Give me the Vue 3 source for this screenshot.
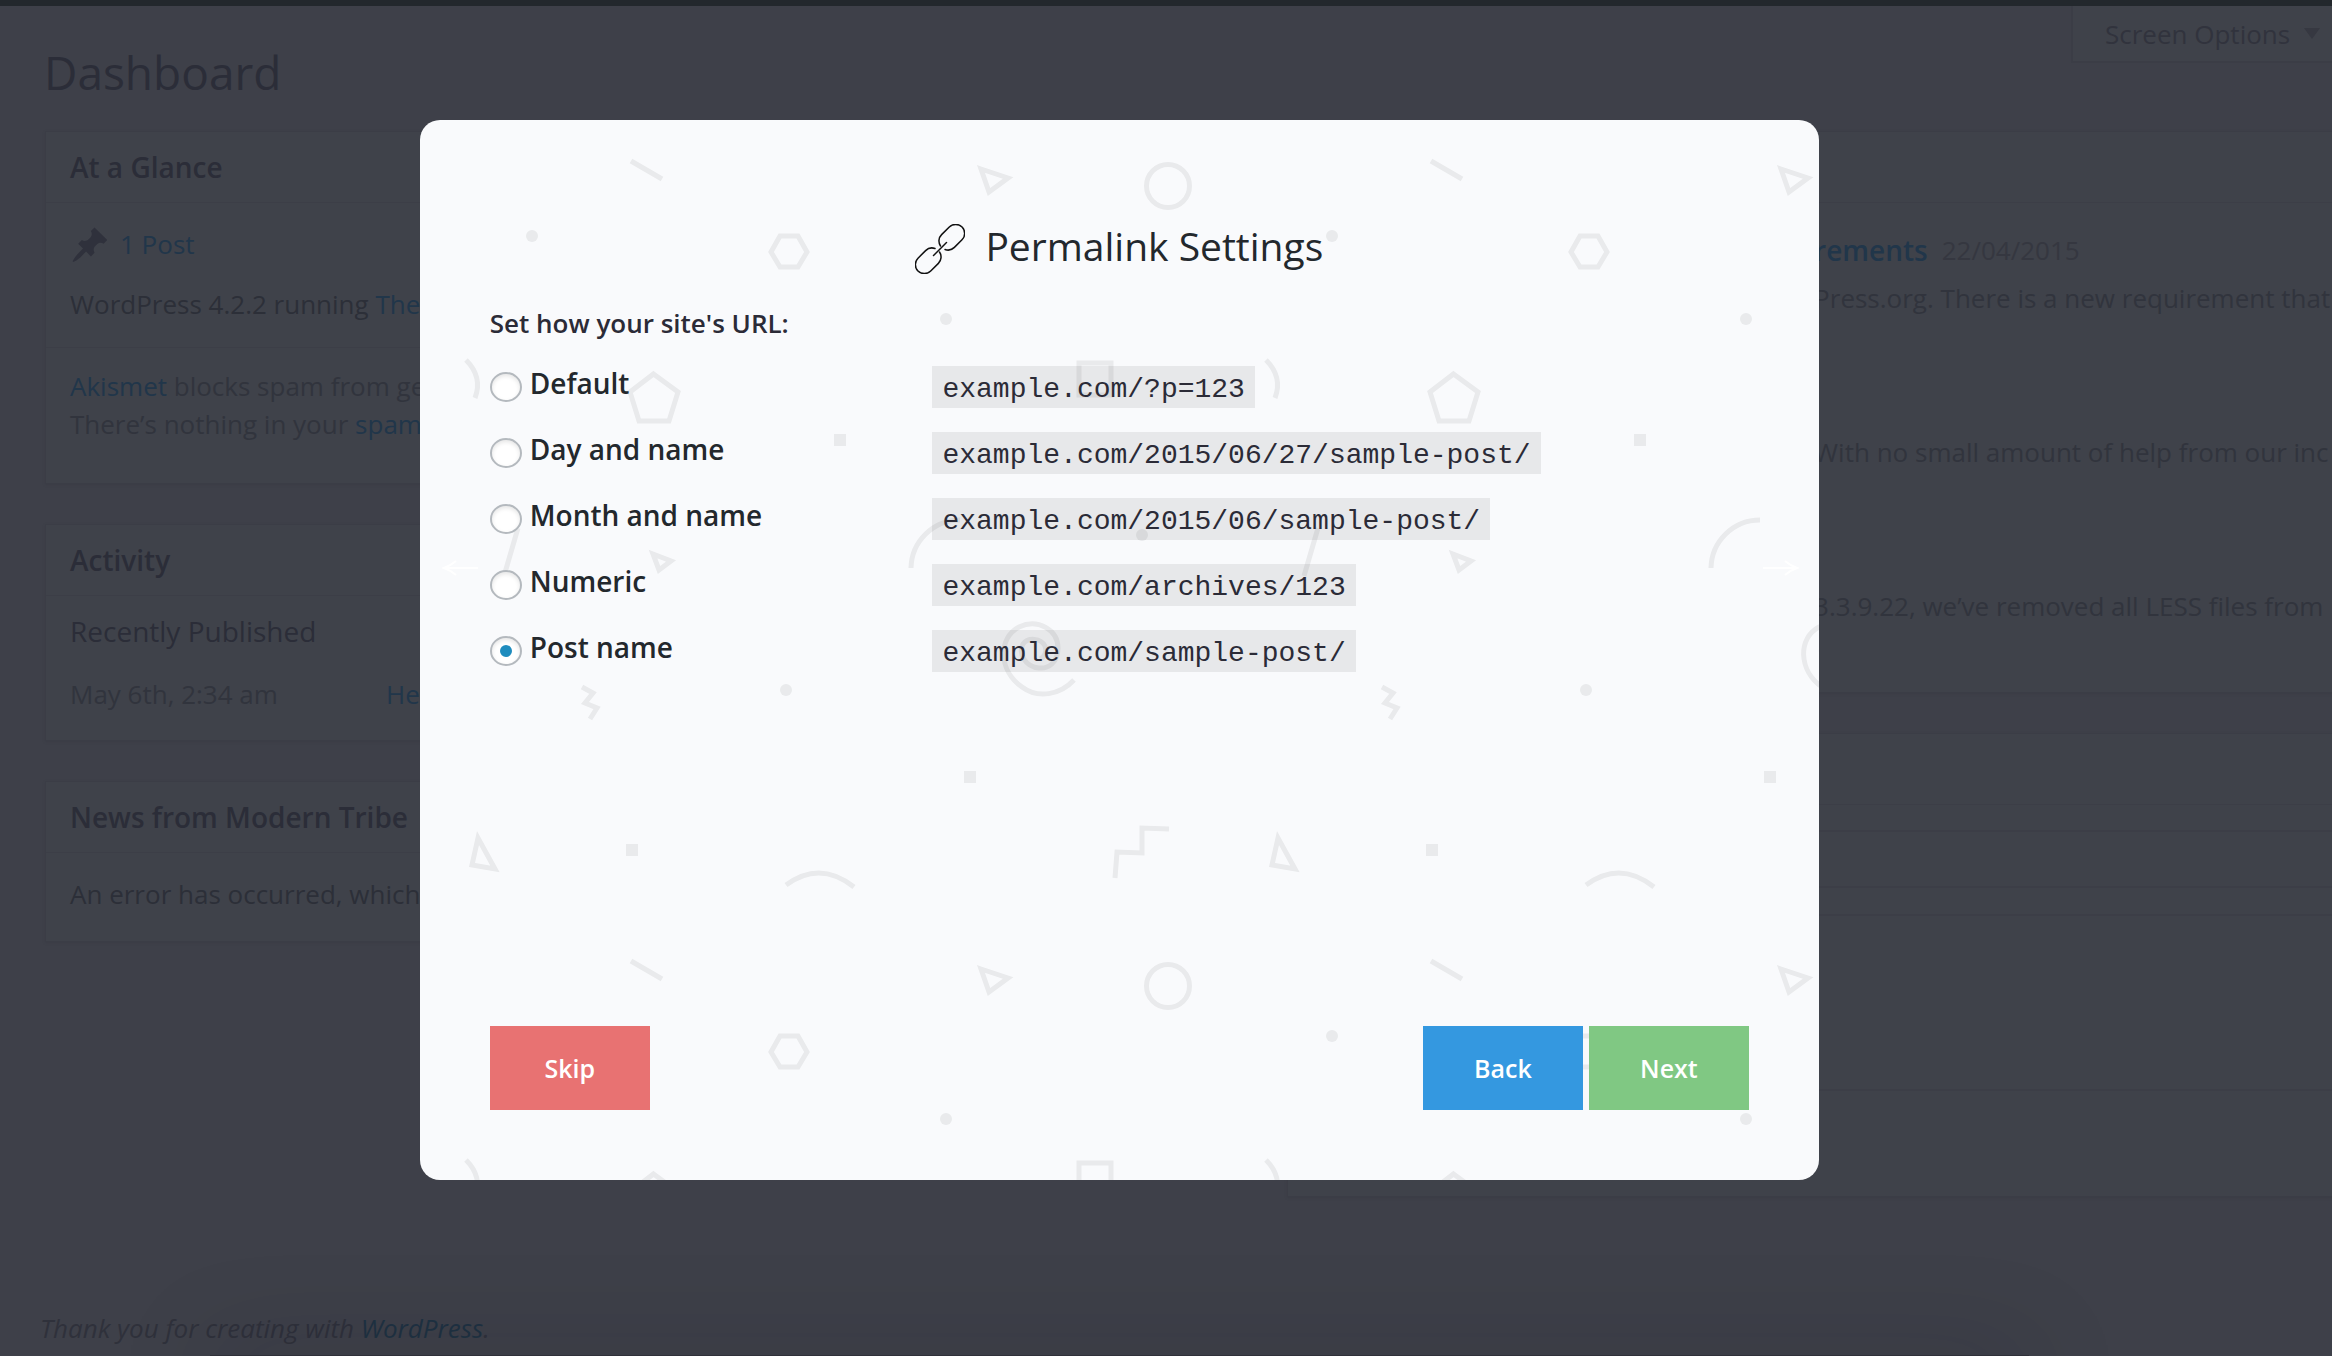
<script setup>
import { ref } from 'vue'

const selected = ref('postname')

const structures = [
  { id: 'default', label: 'Default', url: 'example.com/?p=123' },
  { id: 'day', label: 'Day and name', url: 'example.com/2015/06/27/sample-post/' },
  { id: 'month', label: 'Month and name', url: 'example.com/2015/06/sample-post/' },
  { id: 'numeric', label: 'Numeric', url: 'example.com/archives/123' },
  { id: 'postname', label: 'Post name', url: 'example.com/sample-post/' },
]
</script>

<template>
  <div class="page">
    <div class="admin-bar"></div>

    <div class="admin">
      <header class="top">
        <h1>Dashboard</h1>
        <button type="button" class="screen-options">
          Screen Options
          <svg width="16" height="11" viewBox="0 0 16 11" aria-hidden="true"><path d="M0 0h16L8 11z" fill="#363841" /></svg>
        </button>
      </header>

      <main class="columns">
        <div class="column">
          <section class="card">
            <h2>At a Glance</h2>
            <div class="card-body glance">
              <p class="posts">
                <svg class="pin" viewBox="0 0 20 20" aria-hidden="true">
                  <path fill="currentColor" d="M10.44 3.02l1.82-1.82 6.36 6.35-1.83 1.82c-1.05-.68-2.48-.57-3.41.36l-.75.75c-.92.93-1.04 2.35-.35 3.41l-1.83 1.82-2.41-2.41-2.8 2.79c-.42.42-3.38 2.71-3.8 2.29s1.86-3.39 2.28-3.81l2.79-2.79L4.1 9.36l1.83-1.82c1.05.69 2.48.57 3.4-.36l.75-.75c.93-.92 1.05-2.35.36-3.41z" />
                </svg>
                <a href="#">1 Post</a>
              </p>
              <p class="strong">WordPress 4.2.2 running <a href="#">The</a></p>
            </div>
            <div class="spam">
              <p><a href="#">Akismet</a> blocks spam from ge</p>
              <p>There’s nothing in your <a href="#">spam</a></p>
            </div>
          </section>

          <section class="card">
            <h2>Activity</h2>
            <div class="card-body activity">
              <h3>Recently Published</h3>
              <p class="entry"><span class="date">May 6th, 2:34 am</span><a href="#">He</a></p>
            </div>
          </section>

          <section class="card">
            <h2>News from Modern Tribe</h2>
            <div class="card-body">
              <p class="strong">An error has occurred, which</p>
            </div>
          </section>
        </div>

        <div class="column">
          <section class="card">
            <div class="blank-title"></div>
            <div class="feed">
              <article>
                <p class="feed-title"><a href="#">rements</a><span>22/04/2015</span></p>
                <p>Press.org. There is a new requirement that</p>
              </article>
              <article><p>With no small amount of help from our inc</p></article>
              <article><p>3.3.9.22, we’ve removed all LESS files from</p></article>
            </div>
          </section>
          <section class="card">
            <div class="blank-title"></div>
            <form class="draft" @submit.prevent>
              <input type="text" aria-label="Title">
              <textarea aria-label="Content"></textarea>
            </form>
          </section>
        </div>
      </main>

      <footer class="thanks">Thank you for creating with <a href="#">WordPress</a>.</footer>
    </div>

    <div class="bottom-shade"></div>

    <div class="overlay">
      <div class="modal" role="dialog" aria-labelledby="modal-title">
        <svg class="pattern" aria-hidden="true">
          <defs>
            <pattern id="confetti" width="800" height="800" patternUnits="userSpaceOnUse">
              <g fill="none" stroke="#e9eaec" stroke-width="5">
                <path d="M211 41L242 59" />
                <path d="M561 49L588 58L569 72Z" />
                <circle cx="748" cy="66" r="21.5" />
                <path d="M360 116H378L387 132L378 147H360L351 132Z" />
                <path d="M46 240Q63 257 55 278" />
                <path d="M233.500 254L258 272L249 301H219L210 272Z" />
                <rect x="659" y="243" width="32" height="32" />
                <path d="M98 408L84 456" />
                <path d="M233 434L251 441L239 450Z" />
                <path d="M491 448A49 49 0 0 1 540 400" />
                <path d="M654 560C640 575 618 579 602 567C578 550 578 518 599 507C618 498 638 510 638 528C638 543 628 549 619 548C605 547 598 533 603 524C608 517 621 518 625 526C627 531 625 537 620 539" />
                <path d="M162 567L173 573L165 583L177 588L170 599" />
                <path d="M58 718L52 745L75 749Z" />
                <path d="M366 765Q400 740 434 767" />
                <path d="M695 758L697 732L722 733V708L749 709" />
              </g>
              <g fill="#e9eaec">
                <circle cx="112" cy="116" r="6" />
                <circle cx="526" cy="199" r="6" />
                <circle cx="722" cy="415" r="6" />
                <circle cx="366" cy="570" r="6" />
                <rect x="414" y="314" width="12" height="12" />
                <rect x="544" y="651" width="12" height="12" />
                <rect x="206" y="724" width="12" height="12" />
              </g>
            </pattern>
          </defs>
          <rect width="100%" height="100%" fill="url(#confetti)" />
        </svg>

        <button type="button" class="arrow prev" aria-label="Previous">
          <svg width="36" height="16" viewBox="0 0 36 16"><path d="M36 8H2M14 1Q8 6 2 8Q8 10 14 15" fill="none" stroke="#fff" stroke-width="2" /></svg>
        </button>
        <button type="button" class="arrow next" aria-label="Following">
          <svg width="36" height="16" viewBox="0 0 36 16"><path d="M0 8H34M22 1Q28 6 34 8Q28 10 22 15" fill="none" stroke="#fff" stroke-width="2" /></svg>
        </button>

        <form class="content" @submit.prevent>
          <div class="title">
            <svg width="50" height="50" viewBox="0 0 50 50" fill="none" stroke="#111" stroke-width="1.500" stroke-linecap="round" aria-hidden="true">
              <path d="M30 25.500A9 9 0 0 0 39.400 23.400L47 15.800A9 9 0 0 0 34.300 3L26.600 10.600A9 9 0 0 0 25.500 22" />
              <path d="M20 24.500A9 9 0 0 0 10.600 26.600L3 34.200A9 9 0 0 0 15.700 47L23.400 39.400A9 9 0 0 0 24.500 28" />
              <path d="M18.500 31.500L31.500 18.500" />
            </svg>
            <h2 id="modal-title">Permalink Settings</h2>
          </div>

          <fieldset>
            <legend>Set how your site's URL:</legend>
            <div class="options">
              <div v-for="s in structures" :key="s.id" class="option">
                <label :for="s.id">
                  <input :id="s.id" v-model="selected" type="radio" name="structure" :value="s.id">
                  {{ s.label }}
                </label>
                <div><code>{{ s.url }}</code></div>
              </div>
            </div>
          </fieldset>

          <div class="actions">
            <button type="button" class="btn skip">Skip</button>
            <div class="steps">
              <button type="button" class="btn back">Back</button>
              <button type="submit" class="btn forward">Next</button>
            </div>
          </div>
        </form>
      </div>
    </div>
  </div>
</template>

<style>
body {
  margin: 0;
  background: #3e4049;
}
</style>

<style scoped>
* {
  box-sizing: border-box;
}

.page {
  position: relative;
  display: flex;
  flex-direction: column;
  min-height: 100vh;
  overflow: hidden;
  background: #3e4049;
  color: #31343d;
  font-family: "Open Sans", "Noto Sans", sans-serif;
  font-size: 26px;
  line-height: 38px;
}

h1,
h2,
h3,
p {
  margin: 0;
}

button,
input,
textarea {
  font: inherit;
  margin: 0;
}

a {
  color: #21364a;
  text-decoration: none;
}

.admin-bar {
  height: 6px;
  background: #23282d;
}

.admin {
  flex: 1;
  display: flex;
  flex-direction: column;
}

.top {
  display: flex;
  justify-content: space-between;
  align-items: flex-start;
  height: 125px;
  padding-left: 44px;
}

h1 {
  padding-top: 35px;
  color: #2b2d38;
  font-size: 46px;
  font-weight: 400;
  line-height: 62px;
}

.screen-options {
  display: flex;
  align-items: center;
  gap: 14px;
  width: 261px;
  height: 57px;
  padding: 0 0 0 32px;
  border: solid #3b3d46;
  border-width: 0 0 2px 2px;
  background: #3f424a;
  color: #31333d;
  white-space: nowrap;
}

.columns {
  display: grid;
  grid-template-columns: 53% 53%;
  gap: 30px;
  padding-left: 45px;
}

.column {
  display: flex;
  flex-direction: column;
  gap: 40px;
}

.card {
  border: 1px solid #3b3d46;
  background: #3f424a;
  box-shadow: 0 1px 2px #3b3d46;
  white-space: nowrap;
}

.card h2,
.blank-title {
  height: 71px;
  padding: 16px 24px;
  border-bottom: 1px solid #3c3e47;
  color: #2b2d38;
  font-size: 28px;
  font-weight: 600;
}

.card-body {
  padding: 22px 24px 28px;
}

.glance {
  display: flex;
  flex-direction: column;
  gap: 22px;
  padding-bottom: 24px;
}

.posts {
  display: flex;
  gap: 10px;
}

.pin {
  width: 40px;
  height: 40px;
  margin-bottom: -2px;
  color: #2f313c;
}

.strong {
  color: #2c2f38;
}

.spam {
  padding: 19px 24px 40px;
  border-top: 1px solid #3c3e47;
}

.activity {
  display: flex;
  flex-direction: column;
  gap: 25px;
  padding: 16px 24px 27px;
}

h3 {
  color: #2b2d38;
  font-size: 28px;
  font-weight: 400;
}

.entry {
  display: flex;
}

.date {
  flex: 0 0 316px;
}

.feed {
  display: flex;
  flex-direction: column;
  gap: 116px;
  height: 489px;
  padding: 28px 0 0 526px;
}

.feed-title {
  display: flex;
  gap: 14px;
  padding-bottom: 10px;
}

.feed-title a {
  font-size: 28px;
  font-weight: 600;
}

.feed-title span {
  color: #353740;
}

.draft {
  display: flex;
  flex-direction: column;
  gap: 26px;
  padding: 25px 24px 105px;
}

.draft input,
.draft textarea {
  display: block;
  width: 100%;
  height: 58px;
  border: 2px solid #3c3e47;
  background: #3f424a;
  color: inherit;
  resize: none;
}

.draft textarea {
  height: 177px;
}

.thanks {
  margin-top: auto;
  padding: 0 40px 9px;
  color: #2f313b;
  font-style: italic;
}

.thanks a {
  color: #1f3242;
}

/* soft shade rising from the lower edge */
.bottom-shade {
  position: absolute;
  left: 9%;
  right: 13%;
  bottom: -39px;
  height: 40px;
  background: #2f3039;
  box-shadow: 0 0 100px rgba(20, 20, 30, 0.22);
}

.overlay {
  position: absolute;
  inset: 0;
  padding-top: 120px;
}

.modal {
  position: relative;
  width: 60%;
  margin-left: 18%;
  border-radius: 20px;
  background: #f9fafc;
  overflow: hidden;
}

.pattern {
  position: absolute;
  inset: 0;
  width: 100%;
  height: 100%;
}

.arrow {
  position: absolute;
  top: 440px;
  height: 16px;
  padding: 0;
  border: 0;
  background: none;
  line-height: 0;
}

.prev {
  left: 22px;
}

.next {
  right: 20px;
}

.content {
  position: relative;
  display: flex;
  flex-direction: column;
  min-height: 1060px;
  padding: 98px 70px 70px;
}

.title {
  display: flex;
  justify-content: center;
  align-items: flex-end;
  gap: 20px;
  color: #23282d;
}

.title h2 {
  font-size: 39px;
  font-weight: 400;
  line-height: 56px;
}

fieldset {
  margin: 30px 0 0;
  padding: 0;
  border: 0;
}

legend {
  padding: 0;
  color: #2b2b37;
  font-weight: 600;
}

.options {
  display: flex;
  flex-direction: column;
  gap: 24px;
  padding-top: 24px;
}

.option {
  display: grid;
  grid-template-columns: 35% 1fr;
  column-gap: 2px;
  align-items: start;
}

label {
  display: flex;
  align-items: flex-start;
  gap: 8px;
  color: #23282d;
  font-size: 28px;
  font-weight: 600;
  line-height: 34px;
}

input[type="radio"] {
  appearance: none;
  display: grid;
  place-items: center;
  width: 32px;
  height: 30px;
  margin-top: 6px;
  border: 2px solid #b4b9be;
  border-radius: 50%;
  background: #fff;
  box-shadow: inset 0 2px 4px rgba(0, 0, 0, 0.1);
}

input[type="radio"]:checked::before {
  content: "";
  width: 12px;
  height: 12px;
  border-radius: 50%;
  background: #1e8cbe;
}

code {
  display: block;
  width: fit-content;
  padding: 6px 10px 0;
  background: rgba(0, 0, 0, 0.07);
  color: #2b2b37;
  font-family: "Courier New", "Liberation Mono", monospace;
  font-size: 28px;
  line-height: 36px;
}

.actions {
  display: flex;
  justify-content: space-between;
  margin-top: auto;
}

.steps {
  display: flex;
  gap: 6px;
}

.btn {
  width: 160px;
  height: 84px;
  padding: 0;
  border: 0;
  color: #fff;
  font-size: 25px;
  font-weight: 600;
}

.skip {
  background: #e87272;
}

.back {
  background: #3498e0;
}

.forward {
  background: #80c883;
}
</style>
